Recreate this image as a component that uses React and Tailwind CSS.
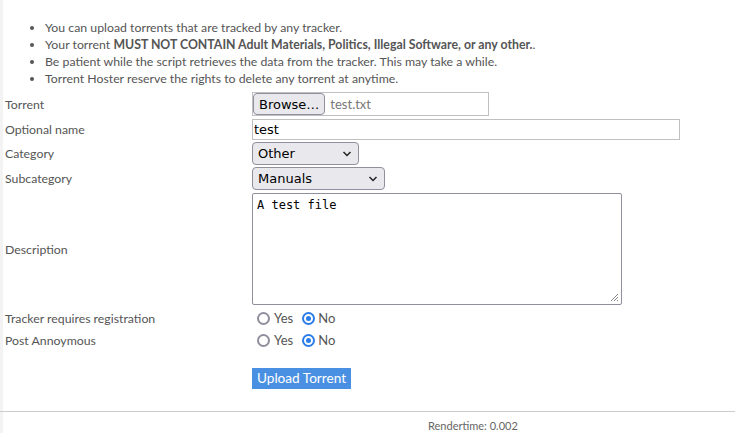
import React from "react";

const rules = [
  <>You can upload torrents that are tracked by any tracker.</>,
  <>
    Your torrent <b>MUST NOT CONTAIN Adult Materials, Politics, Illegal Software, or any other.</b>.
  </>,
  <>Be patient while the script retrieves the data from the tracker. This may take a while.</>,
  <>Torrent Hoster reserve the rights to delete any torrent at anytime.</>,
];

function Chevron() {
  return (
    <svg width="10" height="6" viewBox="0 0 10 6" className="shrink-0">
      <path d="M1.5 1 L5 4.5 L8.5 1" fill="none" stroke="#222" strokeWidth="1.5" />
    </svg>
  );
}

function Select({ value, width }) {
  return (
    <div
      className={`flex items-center justify-between h-[23px] ${width} pl-[5px] pr-[6px] bg-[#e9e9ed] border border-[#8f8f9d] rounded-[4px] text-[13px] text-black font-['DejaVu_Sans',sans-serif]`}
    >
      <span>{value}</span>
      <Chevron />
    </div>
  );
}

function Radio({ checked }) {
  return checked ? (
    <span className="inline-flex items-center justify-center w-[13px] h-[13px] rounded-full border-2 border-[#2b7de9] bg-white">
      <span className="w-[5px] h-[5px] rounded-full bg-[#2b7de9]" />
    </span>
  ) : (
    <span className="inline-block w-[13px] h-[13px] rounded-full border-2 border-[#8f8f9d] bg-white" />
  );
}

function YesNo() {
  return (
    <div className="flex items-center pl-[5px] text-[13px] text-[#555]">
      <Radio />
      <span className="ml-[4px] mr-[9px]">Yes</span>
      <Radio checked />
      <span className="ml-[3px]">No</span>
    </div>
  );
}

function Row({ label, h, children }) {
  return (
    <div className={`flex items-center ${h}`}>
      <div className="w-[252px] pl-[5px] shrink-0">{label}</div>
      <div className="flex-1">{children}</div>
    </div>
  );
}

export default function App() {
  return (
    <div className="min-h-[433px] bg-white border-l-[3px] border-[#f3f3f3] font-['Lato',sans-serif] text-[12.3px] text-[#555] leading-[17px]">
      <ul className="list-disc pl-[42px] pt-[19px]">
        {rules.map((r, i) => (
          <li key={i}>{r}</li>
        ))}
      </ul>

      <div className="flex flex-col gap-[2px] mt-[5px] -ml-[3px]">
        <Row label="Torrent" h="h-[24px]">
          <div className="flex items-center w-[237px] h-[24px] border border-[#c0c0c0]">
            <span className="flex items-center h-[22px] px-[5px] bg-[#e9e9ed] border border-[#8f8f9d] rounded-[4px] text-[13px] text-black font-['DejaVu_Sans',sans-serif]">
              Browse…
            </span>
            <span className="ml-[5px] text-[13px] text-[#777]">test.txt</span>
          </div>
        </Row>
        <Row label="Optional name" h="h-[22px]">
          <div className="flex items-center w-[428px] h-[21px] px-[1px] border border-[#c0c0c0] text-[13px] text-black font-['DejaVu_Sans',sans-serif]">
            test
          </div>
        </Row>
        <Row label="Category" h="h-[23px]">
          <Select value="Other" width="w-[107px]" />
        </Row>
        <Row label="Subcategory" h="h-[23px]">
          <Select value="Manuals" width="w-[133px]" />
        </Row>
        <Row label="Description" h="h-[114px]">
          <div className="relative w-[370px] h-[112px] border border-[#8f8f9d] rounded-[2px] px-[4px] pt-[3px] font-['DejaVu_Sans_Mono',monospace] text-[12px] text-black">
            A test file
            <svg width="9" height="9" viewBox="0 0 9 9" className="absolute right-[2px] bottom-[2px]">
              <path d="M8 1 L1 8 M8 4 L4 8 M8 7 L7 8" stroke="#888" strokeWidth="1" />
            </svg>
          </div>
        </Row>
        <Row label="Tracker requires registration" h="h-[20px]">
          <YesNo />
        </Row>
        <Row label="Post Annoymous" h="h-[20px]">
          <YesNo />
        </Row>
      </div>

      <div className="pl-[249px] mt-[18px]">
        <span className="inline-flex items-center h-[21px] px-[5px] bg-[#4a90e2] text-white text-[13.6px]">
          Upload Torrent
        </span>
      </div>

      <div className="mt-[22px] border-t border-[#cccccc] -ml-[3px]">
        <div className="pl-[428px] pt-[5px] text-[11px] text-[#666]">Rendertime: 0.002</div>
      </div>
    </div>
  );
}
